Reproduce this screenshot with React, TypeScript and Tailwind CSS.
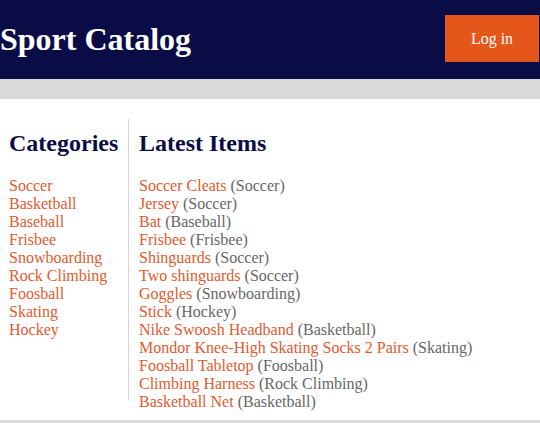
import React from "react";

const categories = [
  "Soccer",
  "Basketball",
  "Baseball",
  "Frisbee",
  "Snowboarding",
  "Rock Climbing",
  "Foosball",
  "Skating",
  "Hockey",
];

const latestItems: { name: string; category: string }[] = [
  { name: "Soccer Cleats", category: "Soccer" },
  { name: "Jersey", category: "Soccer" },
  { name: "Bat", category: "Baseball" },
  { name: "Frisbee", category: "Frisbee" },
  { name: "Shinguards", category: "Soccer" },
  { name: "Two shinguards", category: "Soccer" },
  { name: "Goggles", category: "Snowboarding" },
  { name: "Stick", category: "Hockey" },
  { name: "Nike Swoosh Headband", category: "Basketball" },
  { name: "Mondor Knee-High Skating Socks 2 Pairs", category: "Skating" },
  { name: "Foosball Tabletop", category: "Foosball" },
  { name: "Climbing Harness", category: "Rock Climbing" },
  { name: "Basketball Net", category: "Basketball" },
];

export default function App() {
  return (
    <div className="w-[540px] h-[423px] overflow-hidden bg-white font-['Liberation_Serif',serif]">
      {/* header */}
      <header className="flex justify-between items-start h-[79px] bg-[#0a0d45]">
        <h1 className="mt-[23px] text-[32px] leading-[32px] font-bold text-white">Sport Catalog</h1>
        <button className="mt-[15px] mr-px w-[94px] h-[47px] bg-[#e5561a] text-white text-[16px]">
          Log in
        </button>
      </header>
      <div className="h-[20px] bg-[#d9d9d9]" />

      {/* content */}
      <main className="flex h-[321px] pt-[20px]">
        <section className="w-[129px] h-[281px] pl-[9px] border-r border-[#d4d4d4]">
          <h2 className="mt-[12px] text-[24px] leading-[24px] font-bold text-[#0a0d45]">Categories</h2>
          <ul className="mt-[22px] text-[16px] leading-[18px]">
            {categories.map((c) => (
              <li key={c}>
                <a className="text-[#df5a2e]">{c}</a>
              </li>
            ))}
          </ul>
        </section>
        <section className="pl-[10px]">
          <h2 className="mt-[12px] text-[24px] leading-[24px] font-bold text-[#0a0d45]">Latest Items</h2>
          <ul className="mt-[22px] text-[16px] leading-[18px] whitespace-nowrap">
            {latestItems.map((item) => (
              <li key={item.name}>
                <a className="text-[#df5a2e]">{item.name}</a>{" "}
                <span className="text-[#666666]">({item.category})</span>
              </li>
            ))}
          </ul>
        </section>
      </main>
      <div className="h-[3px] bg-[#d9d9d9]" />
    </div>
  );
}
